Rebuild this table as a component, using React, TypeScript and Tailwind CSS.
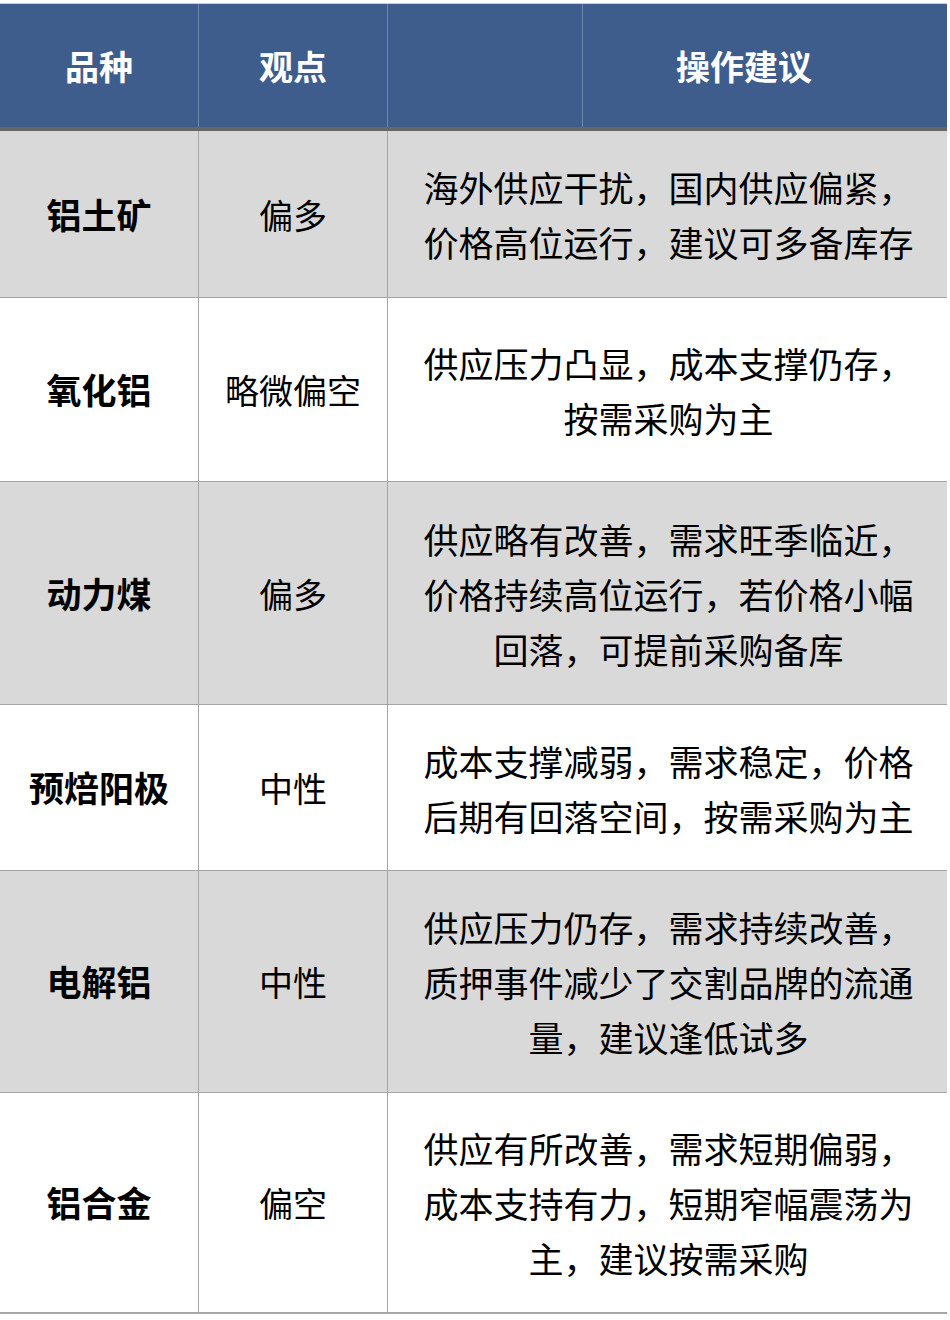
import React from "react";

const rows = [
  {
    name: "铝土矿",
    view: "偏多",
    advice: ["海外供应干扰，国内供应偏紧，", "价格高位运行，建议可多备库存"],
    h: "h-[167px]",
    gray: true,
  },
  {
    name: "氧化铝",
    view: "略微偏空",
    advice: ["供应压力凸显，成本支撑仍存，", "按需采购为主"],
    h: "h-[184px]",
    gray: false,
  },
  {
    name: "动力煤",
    view: "偏多",
    advice: ["供应略有改善，需求旺季临近，", "价格持续高位运行，若价格小幅", "回落，可提前采购备库"],
    h: "h-[223px]",
    gray: true,
  },
  {
    name: "预焙阳极",
    view: "中性",
    advice: ["成本支撑减弱，需求稳定，价格", "后期有回落空间，按需采购为主"],
    h: "h-[166px]",
    gray: false,
  },
  {
    name: "电解铝",
    view: "中性",
    advice: ["供应压力仍存，需求持续改善，", "质押事件减少了交割品牌的流通", "量，建议逢低试多"],
    h: "h-[222px]",
    gray: true,
  },
  {
    name: "铝合金",
    view: "偏空",
    advice: ["供应有所改善，需求短期偏弱，", "成本支持有力，短期窄幅震荡为", "主，建议按需采购"],
    h: "h-[221px]",
    gray: false,
  },
];

const App: React.FC = () => {
  return (
    <div
      className="w-[950px] min-h-[1320px] bg-white pt-[3px]"
      style={{ fontFamily: '"Noto Sans CJK SC", "Noto Sans", sans-serif' }}
    >
      <div className="w-[947px] border-t border-[#c8ccd4]">
        {/* header */}
        <div className="flex h-[127px] bg-[#3e5d8c] text-white text-[34px] font-bold border-b-4 border-[#666666]">
          <div className="w-[199px] flex items-center justify-center border-r border-[#6f86aa]">品种</div>
          <div className="w-[189px] flex items-center justify-center border-r border-[#6f86aa]">观点</div>
          <div className="w-[195px] border-r border-[#6f86aa]"></div>
          <div className="flex-1 flex items-center justify-center pr-[42px]">操作建议</div>
        </div>

        {rows.map((r, i) => (
          <div
            key={r.name}
            className={`grid grid-cols-[199px_189px_1fr] ${r.h} ${r.gray ? "bg-[#d9d9d9]" : "bg-white"} ${
              i === rows.length - 1 ? "border-b-2" : "border-b"
            } border-[#a6a6a6] text-black`}
          >
            <div className="flex items-center justify-center border-r border-[#a6a6a6] text-[35px] font-bold">
              {r.name}
            </div>
            <div className="flex items-center justify-center border-r border-[#a6a6a6] text-[34px]">
              {r.view}
            </div>
            <div className="flex flex-col items-center justify-center text-[35px] leading-[55px] pl-[2px]">
              {r.advice.map((line) => (
                <div key={line} className="whitespace-nowrap">
                  {line}
                </div>
              ))}
            </div>
          </div>
        ))}
      </div>
    </div>
  );
};

export default App;
